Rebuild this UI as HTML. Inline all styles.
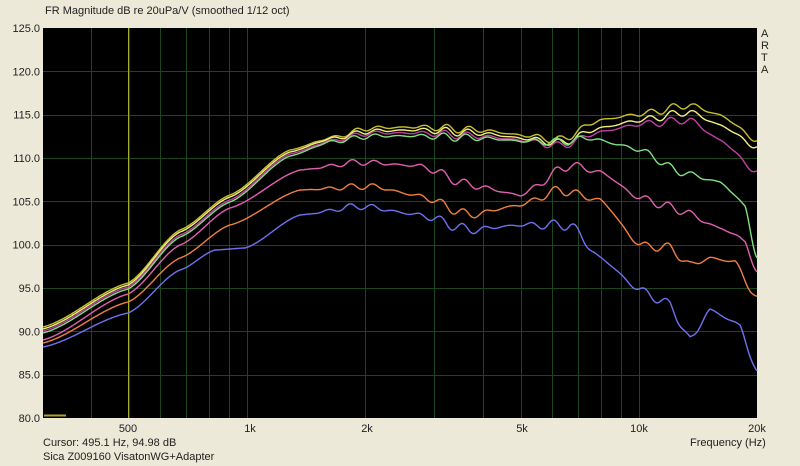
<!DOCTYPE html>
<html><head><meta charset="utf-8"><style>
body{margin:0;width:800px;height:466px;background:#ece9d8;overflow:hidden;font-family:"Liberation Sans",sans-serif;}
svg{position:absolute;left:0;top:0}
text{font-family:"Liberation Sans",sans-serif;font-size:11px;fill:#222}
</style></head><body>
<svg width="800" height="466" id="s">
<rect x="43" y="28" width="714" height="390" fill="#000"/>
<g id="grid" stroke="#1c461c" stroke-width="1"></g>
<line x1="128.5" y1="28" x2="128.5" y2="418" stroke="#a0b020" stroke-width="1"/>
<line x1="44" y1="415.5" x2="66" y2="415.5" stroke="#b0a030" stroke-width="2"/>
<g id="curves" fill="none" stroke-width="1.4"></g>
<text x="45" y="14">FR Magnitude dB re 20uPa/V (smoothed 1/12 oct)</text>
<g id="yl" text-anchor="end"></g>
<text x="128" y="432" text-anchor="middle">500</text>
<text x="250" y="432" text-anchor="middle">1k</text>
<text x="367" y="432" text-anchor="middle">2k</text>
<text x="522" y="432" text-anchor="middle">5k</text>
<text x="639" y="432" text-anchor="middle">10k</text>
<text x="757" y="432" text-anchor="middle">20k</text>
<text x="43" y="446">Cursor: 495.1 Hz, 94.98 dB</text>
<text x="43" y="460">Sica Z009160 VisatonWG+Adapter</text>
<text x="690" y="446">Frequency (Hz)</text>
<g font-size="11"><text x="761" y="37">A</text><text x="761" y="49">R</text><text x="761" y="61">T</text><text x="761" y="73">A</text></g>
</svg>
<script>
var ns="http://www.w3.org/2000/svg";
function X(f){return 247+392*Math.log10(f/1000);}
var g=document.getElementById('grid');
[400,500,600,700,800,900,1000,2000,3000,4000,5000,6000,7000,8000,9000,10000].forEach(function(f){var l=document.createElementNS(ns,'line');var x=Math.round(X(f))+.5;l.setAttribute('x1',x);l.setAttribute('x2',x);l.setAttribute('y1',28);l.setAttribute('y2',418);g.appendChild(l);});
var yl=document.getElementById('yl');
for(var k=0;k<=9;k++){var y=28+k*390/9;if(k>0&&k<9){var l=document.createElementNS(ns,'line');l.setAttribute('x1',43);l.setAttribute('x2',757);l.setAttribute('y1',Math.round(y)+.5);l.setAttribute('y2',Math.round(y)+.5);g.appendChild(l);}
var t=document.createElementNS(ns,'text');t.setAttribute('x',40);t.setAttribute('y',y+4);t.textContent=(125-5*k).toFixed(1);yl.appendChild(t);}
var C=[
["#c8c030",[[43,327],[128,283],[180,230],[230,195],[290,150],[330,138],[370,128],[420,127],[480,130],[520,135],[560,140],[600,120],[640,114],[690,105],[720,115],[757,140]],1],
["#f0f080",[[43,329],[128,285],[180,232],[230,197],[290,152],[330,139],[370,131],[420,130],[480,133],[520,138],[560,143],[600,128],[640,120],[690,112],[720,125],[757,147]],1],
["#c040a0",[[43,331],[128,287],[180,235],[230,200],[290,154],[330,141],[370,133],[420,133],[480,136],[520,140],[560,146],[600,132],[640,124],[690,120],[720,140],[757,172]],1],
["#80e080",[[43,333],[128,289],[180,237],[230,202],[290,156],[330,142],[370,136],[420,136],[480,138],[520,141],[560,142],[590,138],[620,145],[640,150],[680,172],[720,182],[745,205],[757,260]],1],
["#e060b0",[[43,340],[128,294],[180,245],[230,208],[300,170],[360,162],[420,166],[470,185],[520,195],[570,165],[600,172],[640,198],[680,210],[720,228],[745,240],[757,275]],1.2],
["#f08040",[[43,343],[128,302],[180,258],[230,225],[300,190],[370,186],[420,196],[470,215],[520,205],[560,190],[600,200],[640,245],[670,248],[690,265],[710,258],[735,262],[757,300]],1.2],
["#7070f0",[[43,347],[128,313],[180,270],[215,250],[245,248],[300,215],[360,206],[420,215],[470,230],[520,225],[570,225],[600,258],[640,290],[670,305],[690,340],[710,310],[740,325],[757,375]],1.3]];
var cg=document.getElementById('curves');
C.forEach(function(c,ci){var p=c[1],pts=[];for(var x=43;x<=757;x+=1){var i=0;while(i<p.length-2&&p[i+1][0]<x)i++;var a=p[i],b=p[i+1];var t=(x-a[0])/(b[0]-a[0]);t=Math.max(0,Math.min(1,t));var s=t*t*(3-2*t);var y=a[1]+(b[1]-a[1])*(0.5*t+0.5*s);
var amp=x<300?0:Math.min(1,(x-300)/80)*4*c[2];y+=amp*Math.sin(x/3.6+ci*0.3)*(0.55+0.45*Math.sin(x/17));pts.push(x+','+y.toFixed(1));}
var pl=document.createElementNS(ns,'polyline');pl.setAttribute('points',pts.join(' '));pl.setAttribute('stroke',c[0]);cg.appendChild(pl);});
</script>
</body></html>
